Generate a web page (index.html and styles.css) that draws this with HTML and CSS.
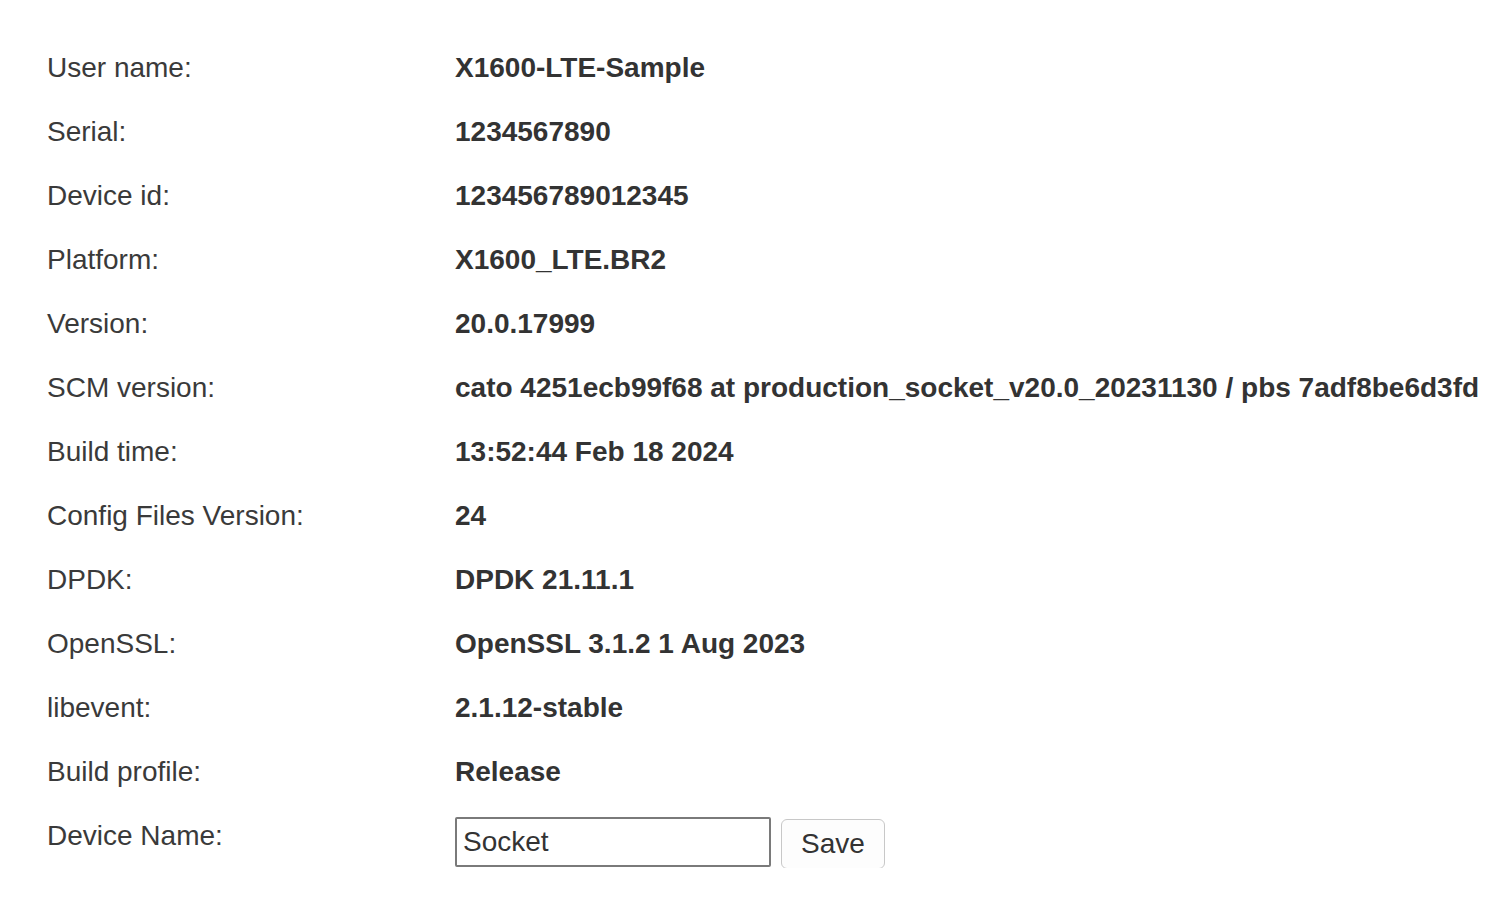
FILE: index.html
```html
<!DOCTYPE html>
<html>
<head>
<meta charset="utf-8">
<link rel="stylesheet" href="styles.css">
</head>
<body>
<div class="info">
  <div class="label">User name:</div><div class="value">X1600-LTE-Sample</div>
  <div class="label">Serial:</div><div class="value">1234567890</div>
  <div class="label">Device id:</div><div class="value">123456789012345</div>
  <div class="label">Platform:</div><div class="value">X1600_LTE.BR2</div>
  <div class="label">Version:</div><div class="value">20.0.17999</div>
  <div class="label">SCM version:</div><div class="value">cato 4251ecb99f68 at production_socket_v20.0_20231130 / pbs 7adf8be6d3fd</div>
  <div class="label">Build time:</div><div class="value">13:52:44 Feb 18 2024</div>
  <div class="label">Config Files Version:</div><div class="value">24</div>
  <div class="label">DPDK:</div><div class="value">DPDK 21.11.1</div>
  <div class="label">OpenSSL:</div><div class="value">OpenSSL 3.1.2 1 Aug 2023</div>
  <div class="label">libevent:</div><div class="value">2.1.12-stable</div>
  <div class="label">Build profile:</div><div class="value">Release</div>
  <div class="label">Device Name:</div>
  <div class="controls">
    <input class="name-input" type="text" value="Socket">
    <button class="save-btn" type="button">Save</button>
  </div>
</div>
</body>
</html>
```
FILE: styles.css
```css
html, body {
  margin: 0;
  padding: 0;
  background: #fff;
}
body {
  font-family: "Liberation Sans", Arial, Helvetica, sans-serif;
  font-size: 28px;
  color: #333;
}
.info {
  display: grid;
  grid-template-columns: 408px 1fr;
  grid-auto-rows: 64px;
  padding: 36px 0 0 47px;
}
.label {
  line-height: 64px;
  white-space: nowrap;
  color: #3a3a3a;
}
.value {
  line-height: 64px;
  font-weight: bold;
  white-space: nowrap;
  color: #333;
}
.controls {
  display: flex;
  align-items: flex-start;
  gap: 10px;
  padding-top: 13px;
}
.name-input {
  box-sizing: border-box;
  width: 316px;
  height: 50px;
  border: 2px solid #7a7a7a;
  border-radius: 2px;
  padding: 0 6px;
  font-family: "Liberation Sans", Arial, sans-serif;
  font-size: 28px;
  color: #333;
  background: #fff;
  outline: none;
  margin: 0;
}
.save-btn {
  box-sizing: border-box;
  width: 104px;
  height: 50px;
  margin-top: 2px;
  border: 1px solid #c8c8c8;
  border-radius: 6px;
  background: #fdfdfd;
  font-family: "Liberation Sans", Arial, sans-serif;
  font-size: 28px;
  color: #333;
  padding: 0;
}
```
